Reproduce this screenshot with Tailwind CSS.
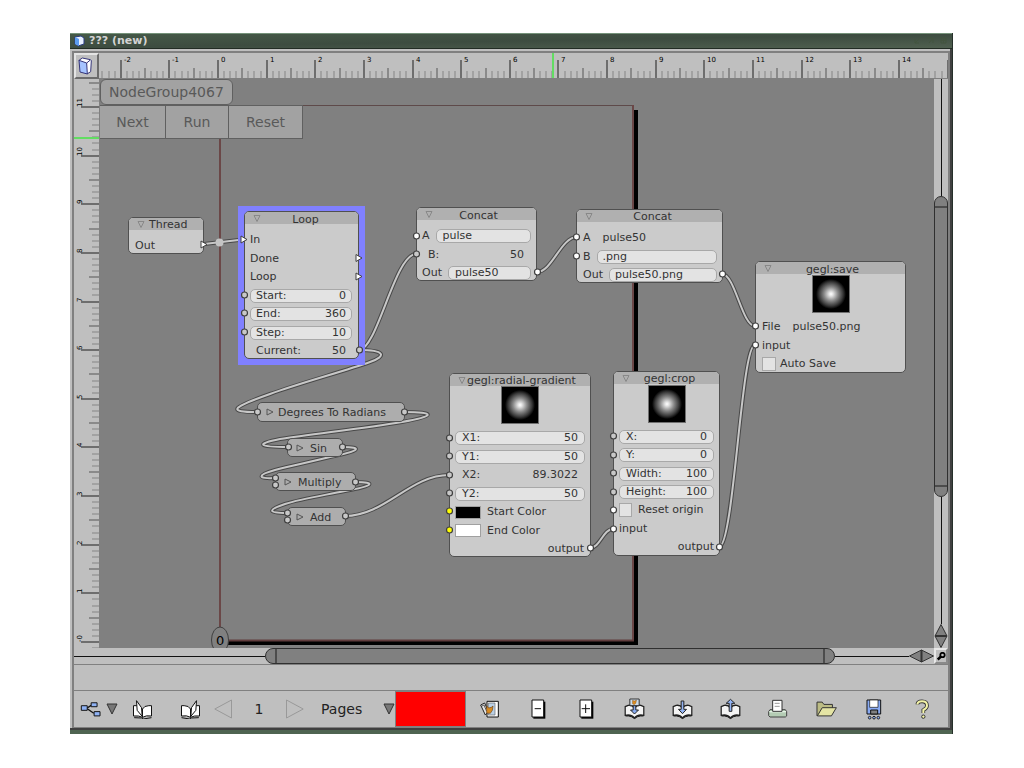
<!DOCTYPE html>
<html lang="en">
<head>
<meta charset="utf-8">
<title>??? (new)</title>
<script src="https://cdn.jsdelivr.net/npm/@tailwindcss/browser@4"></script>
</head>
<body class="bg-white font-['DejaVu_Sans',sans-serif]">
<svg class="hidden" aria-hidden="true">
  <defs>
    <symbol id="fold" viewBox="0 0 8 9"><path d="M1 1.500H7L4 7.500Z" fill="none" stroke="#888" stroke-width="1"/></symbol>
    <symbol id="unfold" viewBox="0 0 8 8"><path d="M1 1V7L7 4Z" fill="none" stroke="#555" stroke-width="1"/></symbol>
    <symbol id="openbook" viewBox="0 0 62 60">
      <path d="M4 20H14L31 30V55Q20 49 4 51Z" fill="#fff" stroke="#111" stroke-width="3"/>
      <path d="M31 55V30Q36 20 50 20H58V51Q42 48 31 55Z" fill="#fff" stroke="#111" stroke-width="3"/>
      <path d="M6 56L28 57L33 60L58 56" fill="none" stroke="#111" stroke-width="3"/>
      <path d="M13 5L28 26L30 52L15 34Z" fill="#fff" stroke="#111" stroke-width="3"/>
    </symbol>
    <symbol id="flatbook" viewBox="0 0 62 46">
      <path d="M3 8L12 4Q24 2 31 12Q38 2 50 4L59 8V34L50 33Q39 33 31 42Q23 33 12 33L3 34Z" fill="#f4f4f4" stroke="#222" stroke-width="4"/>
      <path d="M4 36L13 36Q24 37 31 44Q38 37 49 36L58 36" fill="none" stroke="#222" stroke-width="3"/>
    </symbol>
  </defs>
</svg>

<main class="flex min-h-screen flex-col pt-[33px] pr-[71px] pb-[34px] pl-[70px]">
<div class="flex flex-1 flex-col border-r border-[#26302a] bg-[#bfbfbf]">
  <header class="flex h-4 items-center gap-1 border-t border-b border-t-[#75927a] border-b-[#222c24] bg-linear-to-br from-[#465a48] via-[#3d4c40] to-[#506050] pr-1 pl-[3px]">
    <svg class="h-3 w-3" viewBox="0 0 12 12"><path d="M2 2L8 1L11 3V9L5 11L2 9Z" fill="#e8f0ff" stroke="#2a3c80"/><path d="M2 2L6 4V11L2 9Z" fill="#5c9cf0"/></svg>
    <h1 class="flex-1 text-[11px] leading-3 font-bold text-[#d4d4d4]">??? (new)</h1>
    <svg class="h-3 w-9" viewBox="0 0 36 12" fill="none" stroke="#43543f"><path d="M8 3L3 8M3 4V8H7M15 3H21V8M17 8L21 3M29 3H34V8H29ZM31.500 3V8M29 5.500H34"/></svg>
  </header>

  <div class="flex flex-1 flex-col border-b-4 border-[#4f6451]">
  <div class="flex flex-1 flex-col border-r-2 border-b-2 border-[#404040] pt-0.5 pl-0.5">
  <div class="flex flex-1 flex-col border-2 border-b border-[#808080]">

    <div class="grid flex-1 grid-cols-[25px_1fr_14px] grid-rows-[26px_1fr_16px]">
      <button aria-label="Document" class="flex items-center justify-center border-2 border-t-[#e4e4e4] border-r-[#6c6c6c] border-b-[#6c6c6c] border-l-[#e4e4e4] pr-1">
        <svg class="h-[18px] w-[14px]" viewBox="0 0 42 54"><path d="M3 10L13 3L37 8L40 11L38 44L27 51Z" fill="#fff" stroke="#35357a" stroke-width="3"/><path d="M3 10L26 18L28 51L6 45Z" fill="#a6c4ff" stroke="#35357a" stroke-width="3"/><path d="M26 18L37 9" stroke="#35357a" stroke-width="3"/></svg>
      </button>
      <div class="col-span-2 border-b border-[#808080]"><svg id="ruler-x" class="h-[25px] w-full text-[7px]"></svg></div>
      <div class="min-h-0"><svg id="ruler-y" class="h-full w-[25px] text-[7px]"></svg></div>

      <section class="relative overflow-hidden bg-[#808080] text-[11px] leading-[14px] text-[#333]" aria-label="Node canvas">
        <svg class="absolute inset-0 h-full w-full" aria-hidden="true">
          <g transform="translate(-99 -79)">
            <path d="M634 110H638V645H224V641H634Z" fill="#000"/>
            <path d="M220 105.500H633.500" stroke="#5e4a4a" fill="none"/>
            <path d="M633 105V640" stroke="#6b4747" stroke-width="2"/>
            <path d="M220 105V640" stroke="#6b4747" stroke-width="2"/>
            <path d="M220 640.500H634" stroke="#603c3c" stroke-width="2"/>
            <ellipse cx="220" cy="640" rx="8.500" ry="13" fill="#808080" stroke="#404040"/>
            <text x="216" y="645" font-size="13" fill="#000">0</text>
            <g id="wires" fill="none" stroke="#484848" stroke-width="4">
              <path d="M204 244L243 239.500"/>
              <path d="M359 350C377 350 395 254 416 254"/>
              <path d="M359 350C385 350 387 356 370 362C345 371 300 383 270 394C230 408 228 412 257 412"/>
              <path d="M404 412C436 412 436 416 402 422C360 429 310 434 280 439C255 444 258 447 288 447"/>
              <path d="M342 447C364 447 360 451 330 457C310 462 290 466 275 470C257 475 257 479 275 478"/>
              <path d="M355 482C377 482 374 486 345 491C320 496 300 499 285 504C267 510 268 513 287 513"/>
              <path d="M345 516C385 516 410 475 449 475"/>
              <path d="M537 272C552 272 561 237 577 237"/>
              <path d="M722 274C735 274 742 326 755 326"/>
              <path d="M590 548C600 548 603 529 613 529"/>
              <path d="M719 547C734 547 741 345 755 345"/>
            </g>
            <circle cx="219.500" cy="242.500" r="4" fill="#c4c4c4"/>
          </g>
        </svg>

        <div class="relative flex flex-col items-start pl-px text-sm leading-4 text-[#595959]">
          <h2 class="rounded-md border border-[#606060] bg-[#a2a2a2] px-2 py-1">NodeGroup4067</h2>
          <div class="flex border-b border-[#606060]">
            <button class="h-[33px] w-[66px] border-t border-r border-[#606060] bg-[#a2a2a2]">Next</button>
            <button class="h-[33px] w-[63px] border-t border-r border-[#606060] bg-[#a2a2a2]">Run</button>
            <button class="h-[33px] w-[74px] border-t border-r border-[#606060] bg-[#a2a2a2]">Reset</button>
          </div>
        </div>

        <!-- Thread -->
        <article class="absolute top-[138px] left-[29px] flex h-[37px] w-[76px] flex-col rounded-[5px] border border-[#505050] bg-[#cbcbcb]">
          <h3 class="flex h-3 items-center gap-1 rounded-t bg-[#b0b0b0] pl-2"><svg class="h-[9px] w-2"><use href="#fold"/></svg><span class="pt-0.5">Thread</span></h3>
          <div class="flex h-6 items-center pt-2 pl-1.5">Out</div>
        </article>

        <!-- Loop (selected) -->
        <div class="absolute top-[127px] left-[139px] h-[159px] w-[127px] bg-[#8080ff] pt-[5px] pr-1.5 pb-1.5 pl-1.5">
        <article class="flex h-full flex-col rounded-[5px] border border-[#505050] bg-[#cbcbcb]">
          <h3 class="flex h-3 items-center rounded-t bg-[#b0b0b0] pl-2"><svg class="h-[9px] w-2"><use href="#fold"/></svg><span class="flex-1 pt-1 pr-2 text-center">Loop</span></h3>
          <div class="flex flex-1 flex-col justify-between pt-[9px] pr-1.5 pl-[5px] *:h-[14px]">
            <span>In</span><span>Done</span><span>Loop</span>
            <label class="flex items-center rounded-[5px] border border-[#a8a8a8] bg-[#e3e3e3] px-[5px]"><span>Start:</span><input class="w-0 flex-1 text-right" value="0"></label>
            <label class="flex items-center rounded-[5px] border border-[#a8a8a8] bg-[#e3e3e3] px-[5px]"><span>End:</span><input class="w-0 flex-1 text-right" value="360"></label>
            <label class="flex items-center rounded-[5px] border border-[#a8a8a8] bg-[#e3e3e3] px-[5px]"><span>Step:</span><input class="w-0 flex-1 text-right" value="10"></label>
            <div class="flex justify-between px-1.5"><span>Current:</span><span>50</span></div>
          </div>
        </article>
        </div>

        <!-- Concat -->
        <article class="absolute top-[128px] left-[317px] flex h-[74px] w-[121px] flex-col rounded-[5px] border border-[#505050] bg-[#cbcbcb]">
          <h3 class="flex h-3 items-center rounded-t bg-[#b0b0b0] pl-2"><svg class="h-[9px] w-2"><use href="#fold"/></svg><span class="flex-1 pt-1 pr-3 text-center">Concat</span></h3>
          <div class="flex flex-1 flex-col justify-between pt-[9px] pr-[5px] pl-[5px] *:h-[14px]">
            <label class="flex items-center gap-1.5"><span>A</span><input class="h-[14px] w-0 flex-1 rounded-[5px] border border-[#a8a8a8] bg-[#e3e3e3] px-1.5" value="pulse"></label>
            <div class="flex justify-between pr-[7px] pl-1.5"><span>B:</span><span>50</span></div>
            <label class="flex items-center gap-1.5"><span>Out</span><input class="h-[14px] w-0 flex-1 rounded-[5px] border border-[#a8a8a8] bg-[#e3e3e3] px-1.5" value="pulse50"></label>
          </div>
        </article>

        <!-- Concat -->
        <article class="absolute top-[130px] left-[477px] flex h-[74px] w-[147px] flex-col rounded-[5px] border border-[#505050] bg-[#cbcbcb]">
          <h3 class="flex h-3 items-center rounded-t bg-[#b0b0b0] pl-2"><svg class="h-[9px] w-2"><use href="#fold"/></svg><span class="flex-1 pt-0.5 pr-2.5 text-center">Concat</span></h3>
          <div class="flex flex-1 flex-col justify-between pt-[9px] pr-[5px] pl-1.5 *:h-[14px]">
            <div class="flex gap-3"><span>A</span><span>pulse50</span></div>
            <label class="flex items-center gap-1.5"><span>B</span><input class="h-[14px] w-0 flex-1 rounded-[5px] border border-[#a8a8a8] bg-[#e3e3e3] px-[5px]" value=".png"></label>
            <label class="flex items-center gap-1.5"><span>Out</span><input class="h-[14px] w-0 flex-1 rounded-[5px] border border-[#a8a8a8] bg-[#e3e3e3] px-[5px]" value="pulse50.png"></label>
          </div>
        </article>

        <!-- gegl:save -->
        <article class="absolute top-[182px] left-[656px] flex h-[112px] w-[151px] flex-col rounded-[5px] border border-[#505050] bg-[#cbcbcb]">
          <h3 class="flex h-3 items-center rounded-t bg-[#b0b0b0] pl-2"><svg class="h-[9px] w-2"><use href="#fold"/></svg><span class="flex-1 pt-1 pr-3 text-center">gegl:save</span></h3>
          <div class="mt-px h-[38px] w-[38px] self-center border border-[#707070] bg-[radial-gradient(circle,#fff_0,#e4e4e4_2px,#888_7px,#383838_12px,#000_15px)]"></div>
          <div class="flex flex-1 flex-col justify-between pt-[7px] pb-px pl-1.5 *:h-[14px]">
            <div class="flex gap-3"><span>File</span><span>pulse50.png</span></div>
            <span>input</span>
            <label class="flex items-center gap-1"><input type="checkbox" class="h-3.5 w-3.5 appearance-none border border-[#a8a8a8] bg-[#e3e3e3]"><span>Auto Save</span></label>
          </div>
        </article>

        <!-- gegl:radial-gradient -->
        <article class="absolute top-[294px] left-[350px] flex h-[184px] w-[142px] flex-col rounded-[5px] border border-[#505050] bg-[#cbcbcb]">
          <h3 class="flex h-3 items-center rounded-t bg-[#b0b0b0] pl-2"><svg class="h-[9px] w-2"><use href="#fold"/></svg><span class="pt-0.5 pl-px whitespace-nowrap">gegl:radial-gradient</span></h3>
          <div class="h-[38px] w-[38px] shrink-0 self-center border border-[#707070] bg-[radial-gradient(circle,#fff_0,#e4e4e4_2px,#888_7px,#383838_12px,#000_15px)]"></div>
          <div class="flex flex-1 flex-col justify-between px-[5px] pt-[7px] *:h-[14px]">
            <label class="flex items-center rounded-[5px] border border-[#a8a8a8] bg-[#e3e3e3] px-1.5"><span>X1:</span><input class="w-0 flex-1 text-right" value="50"></label>
            <label class="flex items-center rounded-[5px] border border-[#a8a8a8] bg-[#e3e3e3] px-1.5"><span>Y1:</span><input class="w-0 flex-1 text-right" value="50"></label>
            <div class="flex justify-between px-[7px]"><span>X2:</span><span>89.3022</span></div>
            <label class="flex items-center rounded-[5px] border border-[#a8a8a8] bg-[#e3e3e3] px-1.5"><span>Y2:</span><input class="w-0 flex-1 text-right" value="50"></label>
            <div class="flex items-center gap-1.5"><button aria-label="Start Color" class="h-[13px] w-[26px] border border-[#a0a0a0] bg-black"></button><span>Start Color</span></div>
            <div class="flex items-center gap-1.5"><button aria-label="End Color" class="h-[13px] w-[26px] border border-[#a0a0a0] bg-white"></button><span>End Color</span></div>
            <span class="pr-px text-right">output</span>
          </div>
        </article>

        <!-- gegl:crop -->
        <article class="absolute top-[292px] left-[514px] flex h-[185px] w-[107px] flex-col rounded-[5px] border border-[#505050] bg-[#cbcbcb]">
          <h3 class="flex h-3 items-center rounded-t bg-[#b0b0b0] pl-2"><svg class="h-[9px] w-2"><use href="#fold"/></svg><span class="flex-1 pt-0.5 pr-2.5 text-center">gegl:crop</span></h3>
          <div class="mt-px h-[38px] w-[38px] shrink-0 self-center border border-[#707070] bg-[radial-gradient(circle,#fff_0,#e4e4e4_2px,#888_7px,#383838_12px,#000_15px)]"></div>
          <div class="flex flex-1 flex-col justify-between px-[5px] pt-[7px] pb-px *:h-[14px]">
            <label class="flex items-center rounded-[5px] border border-[#a8a8a8] bg-[#e3e3e3] px-1.5"><span>X:</span><input class="w-0 flex-1 text-right" value="0"></label>
            <label class="flex items-center rounded-[5px] border border-[#a8a8a8] bg-[#e3e3e3] px-1.5"><span>Y:</span><input class="w-0 flex-1 text-right" value="0"></label>
            <label class="flex items-center rounded-[5px] border border-[#a8a8a8] bg-[#e3e3e3] px-1.5"><span>Width:</span><input class="w-0 flex-1 text-right" value="100"></label>
            <label class="flex items-center rounded-[5px] border border-[#a8a8a8] bg-[#e3e3e3] px-1.5"><span>Height:</span><input class="w-0 flex-1 text-right" value="100"></label>
            <label class="flex items-center gap-1.5"><input type="checkbox" class="h-3.5 w-[13px] appearance-none border border-[#a8a8a8] bg-[#e3e3e3]"><span>Reset origin</span></label>
            <span>input</span>
            <span class="text-right">output</span>
          </div>
        </article>

        <!-- Collapsed nodes -->
        <article class="absolute top-[323px] left-[158px] flex h-5 w-[148px] items-center gap-1 rounded-[5px] border border-[#505050] bg-[#adadad] pl-2"><svg class="h-2 w-2"><use href="#unfold"/></svg><h3 class="pt-0.5 whitespace-nowrap">Degrees To Radians</h3></article>
        <article class="absolute top-[359px] left-[188px] flex h-[19px] w-[56px] items-center gap-1.5 rounded-[5px] border border-[#505050] bg-[#adadad] pl-2"><svg class="h-2 w-2"><use href="#unfold"/></svg><h3 class="pt-0.5">Sin</h3></article>
        <article class="absolute top-[393px] left-[176px] flex h-[19px] w-[81px] items-center gap-1.5 rounded-[5px] border border-[#505050] bg-[#adadad] pl-2"><svg class="h-2 w-2"><use href="#unfold"/></svg><h3 class="pt-0.5">Multiply</h3></article>
        <article class="absolute top-[428px] left-[188px] flex h-[19px] w-[59px] items-center gap-1.5 rounded-[5px] border border-[#505050] bg-[#adadad] pl-2"><svg class="h-2 w-2"><use href="#unfold"/></svg><h3 class="pt-0.5">Add</h3></article>

        <!-- Ports sit over the node edges -->
        <svg class="pointer-events-none absolute inset-0 h-full w-full" aria-hidden="true">
          <g transform="translate(-99 -79)" stroke="#404040">
            <g fill="#fff"><path d="M201 241V248L207 244.500Z"/><path d="M241 236V243L247 239.500Z"/><path d="M356 254.500V261.500L362 258Z"/><path d="M356 273V280L362 276.500Z"/></g>
            <g id="ports" stroke-width="1.200"></g>
          </g>
        </svg>
      </section>

      <div class="flex flex-col items-center" role="scrollbar" aria-label="Vertical scroll" aria-orientation="vertical" aria-controls="ruler-y" aria-valuenow="30">
        <div class="w-px flex-[117] bg-[#111]"></div>
        <div class="flex w-full flex-[281] flex-col rounded-t-[7px] rounded-b-[7px] border border-[#303030] bg-[#808080] py-[9px]"><div class="flex-1 border-y-2 border-[#4c4c4c]"></div></div>
        <div class="w-px flex-[127] bg-[#111]"></div>
        <svg class="h-6 w-3.5" viewBox="0 0 14 24"><path d="M7 .5L13 12L7 23.500L1 12Z" fill="#808080" stroke="#333"/><path d="M1 12H13" stroke="#333" stroke-width="2"/></svg>
      </div>

      <div class="col-span-2 flex items-center" role="scrollbar" aria-label="Horizontal scroll" aria-controls="ruler-x" aria-valuenow="30">
        <div class="h-px flex-[191] bg-[#111]"></div>
        <div class="flex h-4 flex-[550] rounded-r-[8px] rounded-l-[8px] border border-[#303030] bg-[#808080] px-[9px]"><div class="flex-1 border-x-2 border-[#4c4c4c]"></div></div>
        <div class="h-px flex-[74] bg-[#111]"></div>
        <svg class="h-3.5 w-[25px]" viewBox="0 0 25 14"><path d="M.5 7L12.500 1L24.500 7L12.500 13Z" fill="#808080" stroke="#333"/><path d="M12.500 1V13" stroke="#333" stroke-width="2"/></svg>
      </div>
      <button aria-label="Zoom" class="flex items-center justify-center border-2 border-t-[#e8e8e8] border-r-[#8a8a8a] border-b-[#8a8a8a] border-l-[#e8e8e8]">
        <svg class="h-[9px] w-[9px]" viewBox="0 0 9 9" fill="none" stroke="#000"><circle cx="5.500" cy="3" r="2.200" stroke-width="1.800"/><path d="M4 4.500L.8 7.500" stroke-width="2.400"/></svg>
      </button>
    </div>

    <div class="h-[27px] border-y border-[#808080]"></div>

    <div class="flex h-9 items-stretch pr-0.5 text-sm text-[#222]">
      <button aria-label="Views" class="flex w-8 items-center justify-center"><svg class="h-[18px] w-[21px]" viewBox="46 420 64 54"><path d="M68 444L80 436M68 446L88 460" stroke="#111" stroke-width="4"/><g fill="#8fb2f4" stroke="#111" stroke-width="3"><path d="M50 437H68V451H50ZM80 428H98V440H80ZM89 455H107V468H89Z"/></g></svg></button>
      <button aria-label="View menu" class="flex w-3 items-center justify-center"><svg class="h-3 w-3" viewBox="0 0 12 12"><path d="M1 1H11L6 11Z" fill="#777" stroke="#333"/></svg></button>
      <button aria-label="Previous spread" class="flex w-12 items-center justify-center"><svg class="h-5 w-[21px]"><use href="#openbook"/></svg></button>
      <button aria-label="Next spread" class="flex w-12 items-center justify-center"><svg class="h-5 w-[21px] -scale-x-100"><use href="#openbook"/></svg></button>
      <button aria-label="Previous page" class="flex w-[18px] items-center justify-center"><svg class="h-5 w-[18px]" viewBox="0 0 18 20"><path d="M17.500 1V19L.8 10Z" fill="none" stroke="#999"/></svg></button>
      <span class="flex w-[54px] items-center justify-center">1</span>
      <button aria-label="Next page" class="flex w-[18px] items-center justify-center"><svg class="h-5 w-[18px]" viewBox="0 0 18 20"><path d="M.5 1V19L17.200 10Z" fill="none" stroke="#999"/></svg></button>
      <div class="relative flex w-[91px]">
        <select aria-label="Page type" class="w-full appearance-none pl-[17px]"><option>Pages</option></select>
        <svg class="pointer-events-none absolute top-3 right-0 h-3 w-3" viewBox="0 0 12 12"><path d="M1 1H11L6 11Z" fill="#777" stroke="#333"/></svg>
      </div>
      <button aria-label="Current color" class="w-[71px] border border-[#808080] bg-[#f00]"></button>
      <div class="grid flex-1 grid-cols-10">
        <button aria-label="Insert image" class="flex items-center justify-center"><svg class="h-5 w-5" viewBox="288 178 60 60"><path d="M309 185H343V232H309Z" fill="#fff" stroke="#111" stroke-width="3"/><path d="M313 190H333V226H313Z" fill="#b9d0e6" stroke="#666" stroke-width="2"/><path d="M290 196L302 190L313 216L304 226Z" fill="#e4e4e4" stroke="#222" stroke-width="3"/><path d="M294 199L300 196L308 215" fill="none" stroke="#555" stroke-width="3"/><path d="M308 199L314 205L322 203L327 199L325 212L319 221L308 220Z" fill="#d98b20" stroke="#704414" stroke-width="2"/></svg></button>
        <button aria-label="Remove page" class="flex items-center justify-center"><svg class="h-5 w-[15px]" viewBox="442 180 45 60"><path d="M449 188H485V239H449Z" fill="#000"/><path d="M445 183H480V234H445Z" fill="#fff" stroke="#111" stroke-width="3"/><path d="M453 209H472" stroke="#111" stroke-width="3"/></svg></button>
        <button aria-label="Add page" class="flex items-center justify-center"><svg class="h-5 w-[15px]" viewBox="442 180 45 60"><path d="M449 188H485V239H449Z" fill="#000"/><path d="M445 183H480V234H445Z" fill="#fff" stroke="#111" stroke-width="3"/><path d="M450 209H475M462 196V222" stroke="#111" stroke-width="3"/></svg></button>
        <button aria-label="Import image" class="flex items-center justify-center"><svg class="h-[22px] w-[21px]" viewBox="0 0 62 66"><use href="#flatbook" y="18" width="62" height="46"/><path d="M27 22H35V36H43L31 48L19 36H27Z" fill="#86aaf0" stroke="#222" stroke-width="3"/><path d="M17 3H45V23H17Z" fill="#ccdbe8" stroke="#333" stroke-width="3"/><path d="M25 7L31 9L37 6L35 16L30 20L25 17Z" fill="#d98b20" stroke="#704414"/></svg></button>
        <button aria-label="Import" class="flex items-center justify-center"><svg class="h-[22px] w-[21px]" viewBox="0 0 62 66"><use href="#flatbook" y="18" width="62" height="46"/><path d="M27 9H35V34H43L31 47L19 34H27Z" fill="#93b4f4" stroke="#222" stroke-width="3"/></svg></button>
        <button aria-label="Export" class="flex items-center justify-center"><svg class="h-[22px] w-[21px]" viewBox="0 0 62 66"><use href="#flatbook" y="18" width="62" height="46"/><path d="M27 40H35V16H44L31 4L18 16H27Z" fill="#93b4f4" stroke="#222" stroke-width="3"/></svg></button>
        <button aria-label="Print" class="flex items-center justify-center"><svg class="h-5 w-5" viewBox="236 300 60 60"><path d="M242 332H288L292 338V351L288 354H242L238 350V338Z" fill="#b4ccb4" stroke="#444" stroke-width="3"/><path d="M240 338H290" stroke="#e8f4e8" stroke-width="4"/><path d="M250 304H278V337H250Z" fill="#fff" stroke="#333" stroke-width="3"/><path d="M256 313H271M256 322H271" stroke="#999" stroke-width="3"/></svg></button>
        <button aria-label="Open" class="flex items-center justify-center"><svg class="h-5 w-[21px]" viewBox="378 302 64 58"><path d="M381 352V310H397L402 317H428V330" fill="#bcbc84" stroke="#333" stroke-width="3"/><path d="M382 352L397 327H440L425 352Z" fill="#e4e4a4" stroke="#333" stroke-width="3"/></svg></button>
        <button aria-label="Save" class="flex items-center justify-center"><svg class="h-[21px] w-4" viewBox="529 296 48 63"><path d="M532 299H573V341H532Z" fill="#88aaf4" stroke="#111" stroke-width="3"/><path d="M540 299H565V321H540Z" fill="#fff" stroke="#111" stroke-width="2"/><path d="M543 329H564V341H543Z" fill="#808080" stroke="#111" stroke-width="3"/><g fill="#88aaf4" stroke="#222" stroke-width="3"><circle cx="540" cy="352" r="4"/><circle cx="553" cy="352" r="4"/><circle cx="566" cy="352" r="4"/></g></svg></button>
        <button aria-label="Help" class="flex items-center justify-center"><svg class="h-5 w-[15px]" viewBox="673 298 45 60"><path d="M680 314Q681 305 694 305Q709 305 709 318Q709 325 698 331V340" fill="none" stroke="#333" stroke-width="11"/><path d="M680 314Q681 305 694 305Q709 305 709 318Q709 325 698 331V340" fill="none" stroke="#f4f4a8" stroke-width="6"/><circle cx="698" cy="351" r="5" fill="#f4f4a8" stroke="#333" stroke-width="3"/></svg></button>
      </div>
    </div>
  </div>
  </div>
  </div>
</div>
</main>

<script>
const NS = 'http://www.w3.org/2000/svg';
function add(parent, tag, attrs, text) {
  const el = document.createElementNS(NS, tag);
  for (const k in attrs) el.setAttribute(k, attrs[k]);
  if (text !== undefined) el.textContent = text;
  parent.appendChild(el);
  return el;
}
const rx = document.getElementById('ruler-x');
const ry = document.getElementById('ruler-y');
const STEP = 6.08;
function drawRulers() {
  const width = rx.getBoundingClientRect().width;
  const height = ry.getBoundingClientRect().height;
  rx.replaceChildren();
  ry.replaceChildren();
  for (let i = -24; i <= 400; i++) {
    const major = i % 8 === 0, half = i % 4 === 0;
    const start = major ? 7 : half ? 15 : 18;
    const fill = major ? '#6e6e6e' : half ? '#8a8a8a' : '#a2a2a2';
    const x = Math.round(118 + i * STEP), y = Math.round(562 - i * STEP);
    if (x >= 0 && x < width) {
      add(rx, 'rect', {x, y: start, width: 2, height: 25 - start, fill});
      if (major && x + 14 < width) add(rx, 'text', {x: x + 4, y: 9}, i / 8);
    }
    if (y >= 0 && y < height) {
      add(ry, 'rect', {x: start, y, width: 25 - start, height: 2, fill});
      if (major && y > 12) add(ry, 'text', {transform: `translate(8 ${y + 1}) rotate(-90)`}, i === 0 ? '-0' : i / 8);
    }
  }
  // pointer position markers
  add(rx, 'rect', {x: 453, y: 0, width: 2, height: 25, fill: '#62dd62'});
  add(ry, 'rect', {x: 0, y: 58, width: 25, height: 2, fill: '#62dd62'});
}
drawRulers();
const watcher = new ResizeObserver(drawRulers);
watcher.observe(rx);
watcher.observe(ry);

// light core of every wire over its dark outline
const wires = document.getElementById('wires');
for (const p of [...wires.children]) {
  const core = p.cloneNode();
  core.setAttribute('stroke', '#c8c8c8');
  core.setAttribute('stroke-width', 2);
  wires.appendChild(core);
}
const ports = document.getElementById('ports');
const groups = {
  '#c8c8c8': [[244,295],[244,313],[244,332],[359,350],[416,254],[257,412],[404,412],[288,447],[342,447],[275,478],[275,485],[355,482],[287,513],[287,520],[345,516],[449,438],[449,456],[449,475],[449,493],[613,436],[613,455],[613,473],[613,492]],
  '#ffffff': [[416,236],[537,272],[576,237],[576,256],[722,274],[755,326],[755,345],[590,548],[613,510],[613,529],[719,547]],
  '#ffff00': [[449,511],[449,530]]
};
for (const fill in groups)
  for (const [x, y] of groups[fill]) add(ports, 'circle', {cx: x + .5, cy: y, r: 3, fill});
</script>
</body>
</html>
